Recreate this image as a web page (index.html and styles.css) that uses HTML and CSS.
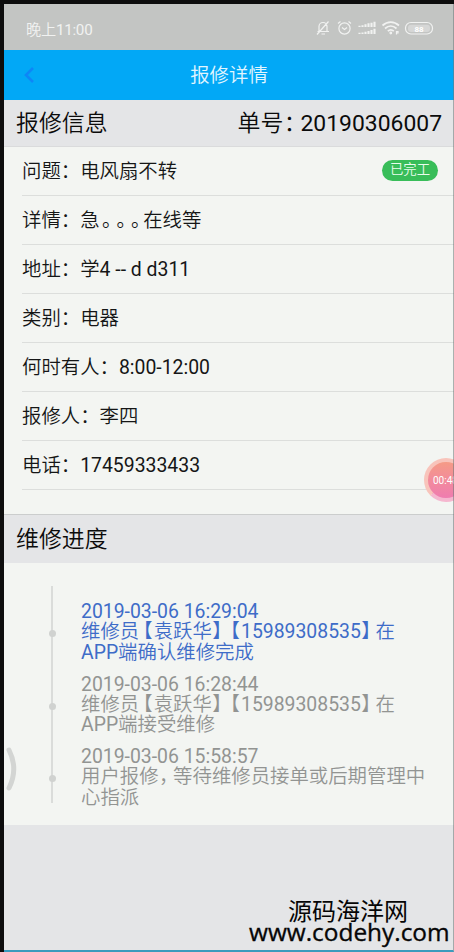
FILE: index.html
```html
<!DOCTYPE html>
<html lang="zh-CN">
<head>
<meta charset="utf-8">
<title>报修详情</title>
<link rel="stylesheet" href="styles.css">
</head>
<body>
<div class="phone">
  <div class="status">
    <span class="clock">晚上11:00</span>
    <svg class="status-icons" width="120" height="18" viewBox="0 0 120 18" fill="none" stroke="#f1f2f1" stroke-width="1.2">
      <path d="M3.500 12.500h11.500M5 12.500V7.500a4 4 0 0 1 8 0v5M7.500 15h3.500M3 15.500L14.500 2.500"/>
      <circle cx="30.500" cy="9.500" r="5.600"/>
      <path d="M24 4.500l2.500-2M37 4.500l-2.500-2M28 8.500l2.500 2 2.500-2"/>
      <path stroke-width="2.100" d="M45.500 8V6.700M48.500 8V6.200M51.500 8V5.200M54.500 8V4.200M57.500 8V3.700M60.500 8V2.700M45.500 15v-1.300M48.500 15v-1.500M51.500 15v-2.200M54.500 15v-3M57.500 15v-4M60.500 15V9.700"/>
      <path stroke-width="1.700" d="M68.500 6.500c5-4.500 11.500-4.500 16.500 0M71 9.500c3.500-3.200 8-3.200 11.500 0M73.800 12.200c2-1.800 4-1.800 6 0"/>
      <circle cx="76.800" cy="14" r=".8" fill="#f1f2f1"/>
      <path d="M82.500 15.500v-3h1.500v1.500h-1.500"/>
      <rect x="91.500" y="3.500" width="27" height="11.500" rx="5.500"/>
      <rect x="94" y="5.700" width="22" height="7.200" rx="3" fill="#d6d7d6" stroke="none"/>
      <text class="battery" x="105" y="12.500" text-anchor="middle">88</text>
    </svg>
  </div>
  <header class="nav">
    <svg class="back" width="14" height="20" viewBox="0 0 14 20"><path d="M11 3L4 10l7 7" fill="none" stroke="#0e86f7" stroke-width="2.600"/></svg>
    <h1>报修详情</h1>
  </header>
  <section>
    <div class="head first"><span>报修信息</span><span>单号<i>：</i>20190306007</span></div>
    <ul class="info">
      <li><span>问题：电风扇不转</span><span class="tag">已完工</span></li>
      <li><span>详情：急<i class="stop">。</i><i class="stop">。</i><i class="stop">。</i>在线等</span></li>
      <li>地址：学4 -- d d311</li>
      <li>类别：电器</li>
      <li>何时有人：8:00-12:00</li>
      <li>报修人：李四</li>
      <li>电话：17459333433</li>
    </ul>
  </section>
  <section>
    <div class="head second">维修进度</div>
    <div class="progress">
      <ol class="timeline">
        <li class="current"><time>2019-03-06 16:29:04</time><p>维修员<i class="open">【</i>袁跃华<i>】</i><i class="open">【</i>15989308535<i>】</i>在<br>APP端确认维修完成</p></li>
        <li><time>2019-03-06 16:28:44</time><p>维修员<i class="open">【</i>袁跃华<i>】</i><i class="open">【</i>15989308535<i>】</i>在<br>APP端接受维修</p></li>
        <li><time>2019-03-06 15:58:57</time><p>用户报修<i>，</i>等待维修员接单或后期管理中<br>心指派</p></li>
      </ol>
    </div>
  </section>
  <svg class="handle" width="14" height="44" viewBox="0 0 14 44"><path d="M3 3q9.500 19 0 38" fill="none" stroke="#d3d5d3" stroke-width="5" stroke-linecap="round"/></svg>
  <div class="recorder">00:48</div>
  <footer class="mark"><span class="site">源码海洋网</span><span class="url">www.codehy.com</span></footer>
</div>
</body>
</html>
```
FILE: styles.css
```css
* { box-sizing: border-box; margin: 0; padding: 0; }
html, body { height: 952px; overflow: hidden; }
body {
  font-family: Roboto, "Noto Sans CJK SC DemiLight", "Noto Sans CJK SC Light", "Noto Sans CJK SC", sans-serif;
  font-size: 19.4px;
  text-spacing-trim: space-all;
  color: #151616;
  background: #0d0d0d;
}
/* punctuation narrowed to three quarters of an em */
i {
  display: inline-block;
  width: .75em;
  padding-left: .02em;
  font-style: normal;
  font-feature-settings: "halt";
}
.stop { padding-left: .12em; }
.open { padding-left: .19em; }
ul, ol { list-style: none; }
.phone {
  position: relative;
  display: flex;
  flex-direction: column;
  height: 952px;
  overflow: hidden;
  background: #e4e5e7;
  border: solid #0d0d0d;
  border-width: 4px 0 0 4px;
}
.phone::after {
  content: "";
  position: absolute;
  inset: 0;
  border-right: 1px solid rgba(110, 120, 120, .55);
  border-bottom: 2px solid #3b9bbd;
}
.status {
  display: flex;
  align-items: center;
  justify-content: space-between;
  flex: none;
  height: 46px;
  padding: 2px 20px 0 22px;
  background: #c3c5c3;
  color: #f1f2f1;
}
.clock { font-size: 15.2px; letter-spacing: -.25px; }
.battery { font: bold 8px Roboto, sans-serif; fill: #fff; stroke: none; }
.nav {
  display: grid;
  grid-template-columns: 50px 1fr 50px;
  align-items: center;
  flex: none;
  height: 50px;
  background: #02a8f6;
}
.back { margin-left: 18px; }
.nav h1 { padding-bottom: 3px; font-size: 19.4px; font-weight: 400; text-align: center; color: #e2f6ff; }
.head {
  display: flex;
  justify-content: space-between;
  align-items: center;
  padding: 0 12px 4px;
  font-size: 22.9px;
  color: #0b0b0b;
  background: #e4e5e7;
}
.first { height: 47px; border-bottom: 1px solid #dadbdc; }
.second { height: 49px; border-top: 1px solid #cbcdcd; }
.info { height: 367px; padding-left: 18px; background: #f3f5f2; }
.info li {
  display: flex;
  align-items: center;
  height: 49px;
  padding: 0 16px 3px 0;
  border-bottom: 1px solid #dcdedc;
}
.tag {
  margin: 2px 0 0 auto;
  width: 56px;
  height: 21px;
  border-radius: 11px;
  line-height: 20px;
  font-size: 13.4px;
  text-align: center;
  color: #e9fced;
  background: #38bd59;
}
.progress { height: 262px; padding: 23px 20px 0 47px; background: #f3f5f2; }
.timeline {
  display: flex;
  flex-direction: column;
  gap: 11.3px;
  height: 217px;
  padding: 16px 0 0 28px;
  border-left: 2px solid #dadcda;
  color: #929492;
  line-height: 20.4px;
  white-space: nowrap;
}
.timeline li { position: relative; }
.timeline li::before {
  content: "";
  position: absolute;
  left: -32px;
  top: 28px;
  width: 7px;
  height: 7px;
  border-radius: 50%;
  background: #d0d2d0;
}
.timeline time { display: block; }
.timeline .current { color: #3e6cc8; }
.handle { position: absolute; left: 2px; top: 743px; }
.recorder {
  position: absolute;
  left: 420px;
  top: 454px;
  width: 44px;
  height: 44px;
  padding-left: 5px;
  border: 4px solid #f8c4bb;
  border-bottom-color: #f5b7cf;
  border-radius: 50%;
  line-height: 37px;
  font-size: 10px;
  color: #fff;
  background: linear-gradient(#f59b86, #ef7cb0);
}
.mark {
  display: flex;
  flex-direction: column;
  margin-top: auto;
  height: 57px;
  color: #060606;
}
.site { margin-left: 284px; font: 400 24px/30px "Noto Sans CJK SC", sans-serif; }
.url {
  margin: -6px 0 0 245px;
  font: 400 24.400px/26px "Open Sans", "Noto Sans", sans-serif;
  -webkit-text-stroke: .35px #060606;
}
```
